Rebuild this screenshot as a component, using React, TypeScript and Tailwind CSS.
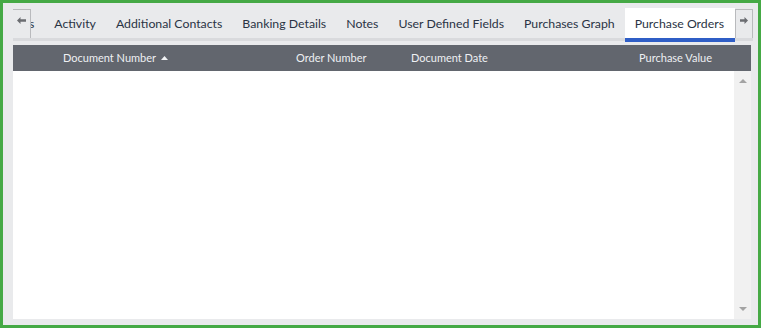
const tabs = ['Documents', 'Activity', 'Additional Contacts', 'Banking Details', 'Notes', 'User Defined Fields', 'Purchases Graph', 'Purchase Orders'];

function ArrowLeft() {
  return (
    <svg width="9" height="7" viewBox="0 0 9 7">
      <path d="M0 3.5 L3.5 0 L3.5 2.2 L9 2.2 L9 4.8 L3.5 4.8 L3.5 7 Z" fill="#6b6d71" />
    </svg>
  );
}

function ArrowRight() {
  return (
    <svg width="8" height="7" viewBox="0 0 8 7">
      <path d="M8 3.5 L4.5 0 L4.5 2.2 L0 2.2 L0 4.8 L4.5 4.8 L4.5 7 Z" fill="#6b6d71" />
    </svg>
  );
}

export default function App() {
  return (
    <div className="w-[762px] h-[329px] bg-white" style={{ fontFamily: 'Lato, "Open Sans", sans-serif' }}>
      <div className="w-[761px] h-[328px] border-[3px] border-[#45a945] bg-[#e9eaec] flex flex-col pl-[10px] pr-[6px]">
        {/* tab strip */}
        <div className="flex h-[35px] w-[740px] shrink-0">
          <div className="w-[18px] mt-[6px] pt-[7px] border-t border-r border-[#b9babd] flex items-start justify-center shrink-0 bg-[#e9eaec] z-10">
            <ArrowLeft />
          </div>
          <div className="flex-1 flex justify-end overflow-hidden">
            {tabs.map((t, i) => {
              const active = i === tabs.length - 1;
              return (
                <div
                  key={t}
                  className={`shrink-0 pl-[10px] mt-[5px] pt-[3px] flex items-center text-[12.3px] whitespace-nowrap text-[#2a3344] ${active ? 'bg-white pr-[11px]' : 'pr-[10px]'}`}
                >
                  {t}
                </div>
              );
            })}
          </div>
          <div className="w-[18px] mt-[6px] pt-[7px] border-t border-l border-r border-[#b9babd] flex items-start justify-center shrink-0">
            <ArrowRight />
          </div>
        </div>
        <div className="relative h-[3px] w-[740px] bg-[#d9dadd] shrink-0">
          <div className="absolute left-[612px] w-[110px] top-0 h-[4px] bg-[#2f5ec6]" />
        </div>
        <div className="h-[4px] shrink-0" />
        {/* grid */}
        <div className="w-[738px] flex-1 flex flex-col">
          <div className="h-[26px] bg-[#62666e] flex items-center text-[11px] text-[#eef0f3] shrink-0">
            <div className="w-[283px] pl-[50px] flex items-center gap-[5px]">
              <span>Document Number</span>
              <svg width="7" height="4" viewBox="0 0 7 4">
                <path d="M0 4 L3.5 0 L7 4 Z" fill="#f2f3f5" />
              </svg>
            </div>
            <div className="w-[115px]">Order Number</div>
            <div className="flex-1">Document Date</div>
            <div className="pr-[39px]">Purchase Value</div>
          </div>
          <div className="flex-1 flex bg-white">
            <div className="flex-1" />
            <div className="w-[17px] bg-[#f1f1f1] flex flex-col items-center justify-between pt-[8px] pb-[8px]">
              <svg width="8" height="4" viewBox="0 0 8 4">
                <path d="M0 4 L4 0 L8 4 Z" fill="#a3a3a3" />
              </svg>
              <svg width="8" height="4" viewBox="0 0 8 4">
                <path d="M0 0 L4 4 L8 0 Z" fill="#a3a3a3" />
              </svg>
            </div>
          </div>
          <div className="h-[6px] shrink-0" />
        </div>
      </div>
    </div>
  );
}
